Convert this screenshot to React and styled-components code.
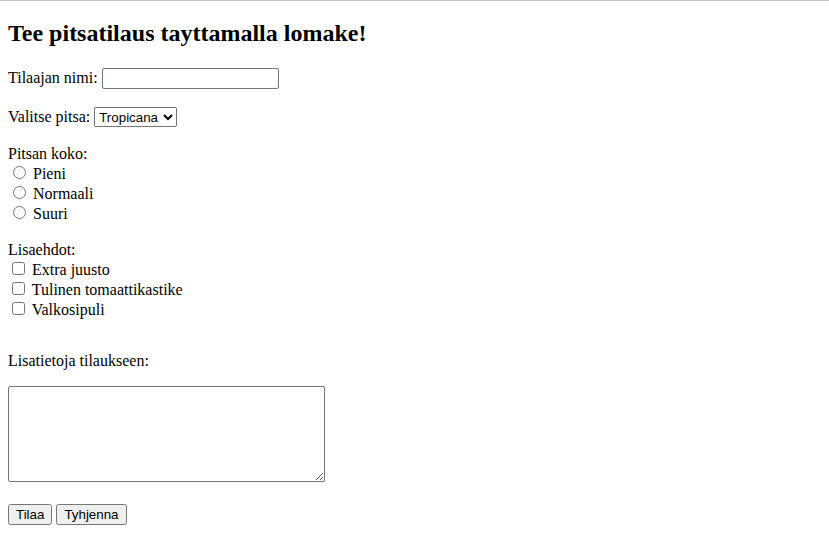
import React from "react"
import styled, { createGlobalStyle } from "styled-components"

const GlobalStyle = createGlobalStyle`
  html {
    border-top: 1px solid #c4c4c4;
  }
  body {
    margin: 8px;
    background: #ffffff;
    color: #000000;
    font-family: "Liberation Serif", "Times New Roman", serif;
    font-size: 16px;
  }
`

const Title = styled.h2`
  font-size: 24px;
  font-weight: bold;
  margin: 11px 0 21px;
`

const Form = styled.form`
  margin: 0;
`

const Field = styled.p`
  margin: 18px 0;
`

// the extras list ends with an empty line before the notes label
const ExtrasField = styled(Field)`
  margin-bottom: 15px;

  &::after {
    content: "";
    display: block;
    height: 18px;
  }
`

const NotesLabel = styled.p`
  margin: 0 0 16px;
`

const controlFont = `
  font-family: "Liberation Sans", Arial, sans-serif;
  font-size: 13.33px;
`

const TextInput = styled.input`
  ${controlFont}
  box-sizing: border-box;
  width: 177px;
  height: 21px;
  padding: 1px 2px;
  border: 1px solid #767676;
  border-radius: 2px;
`

const Select = styled.select`
  ${controlFont}
  box-sizing: border-box;
  width: 83px;
  height: 20px;
`

const Choice = styled.label`
  display: block;
`

const NotesBlock = styled.div`
  margin: 0 0 18px;
`

const TextArea = styled.textarea`
  box-sizing: border-box;
  width: 317px;
  height: 96px;
  font-family: "Liberation Mono", monospace;
  font-size: 13.33px;
  border: 1px solid #767676;
  border-radius: 2px;
`

const Button = styled.button`
  ${controlFont}
  box-sizing: border-box;
  height: 21px;
  margin-right: 4px;
  padding: 1px 6px;
`

const pizzas = ["Tropicana", "Opera", "Kebab", "Fantasia"]
const sizes = ["Pieni", "Normaali", "Suuri"]
const extras = ["Extra juusto", "Tulinen tomaattikastike", "Valkosipuli"]

export default function App() {
  return (
    <>
      <GlobalStyle />
      <Title>Tee pitsatilaus tayttamalla lomake!</Title>
      <Form onSubmit={e => e.preventDefault()}>
        <Field>
          Tilaajan nimi: <TextInput type="text" name="nimi" />
        </Field>

        <Field>
          Valitse pitsa:{" "}
          <Select name="pitsa" defaultValue="Tropicana">
            {pizzas.map(p => (
              <option key={p}>{p}</option>
            ))}
          </Select>
        </Field>

        <Field>
          Pitsan koko:
          {sizes.map(s => (
            <Choice key={s}>
              <input type="radio" name="koko" value={s} /> {s}
            </Choice>
          ))}
        </Field>

        <ExtrasField>
          Lisaehdot:
          {extras.map(x => (
            <Choice key={x}>
              <input type="checkbox" name="lisa" value={x} /> {x}
            </Choice>
          ))}
        </ExtrasField>

        <NotesLabel>Lisatietoja tilaukseen:</NotesLabel>
        <NotesBlock>
          <TextArea name="lisatiedot" />
        </NotesBlock>

        <Button type="submit">Tilaa</Button>
        <Button type="reset">Tyhjenna</Button>
      </Form>
    </>
  )
}
